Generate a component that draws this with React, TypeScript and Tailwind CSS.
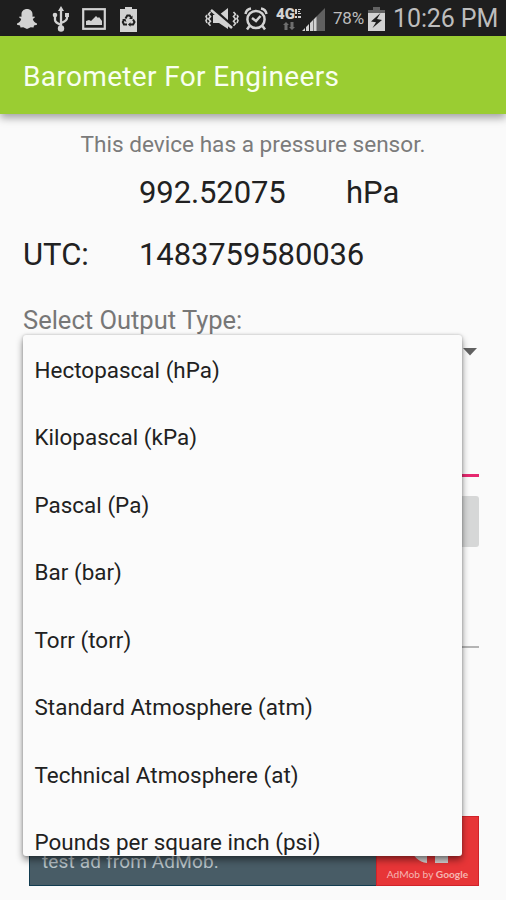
const OUTPUT_TYPES = [
  "Hectopascal (hPa)",
  "Kilopascal (kPa)",
  "Pascal (Pa)",
  "Bar (bar)",
  "Torr (torr)",
  "Standard Atmosphere (atm)",
  "Technical Atmosphere (at)",
  "Pounds per square inch (psi)",
];

function SnapchatIcon() {
  return (
    <svg width="22" height="22" viewBox="0 0 22 22" fill="#d2d2d2">
      <path d="M11 1C7.800 1 5.500 3.200 5.500 6.200v2.500l-2-.3-.3 1.200 2 1.400c-.5 2.200-2 3.600-4.200 4.600v1.200l3 .8.5 1.800 2.800-.2L11 21l3.700-1.800 2.800.2.5-1.800 3-.8v-1.200c-2.200-1-3.700-2.400-4.200-4.600l2-1.400-.3-1.200-2 .3V6.200C16.500 3.200 14.200 1 11 1z" />
    </svg>
  );
}

function UsbIcon() {
  return (
    <svg width="18" height="26" viewBox="0 0 18 26" fill="none" stroke="#d2d2d2" strokeWidth="2.300">
      <path d="M9 4v18M3 10v4c0 2 2 3 6 5M15 9v3c0 2.500-2 3.500-6 5" />
      <path d="M9 0l3 5H6zM13 7h4v4h-4z" fill="#d2d2d2" stroke="none" />
      <circle cx="3" cy="9" r="2.300" fill="#d2d2d2" stroke="none" />
      <circle cx="9" cy="22.500" r="3.200" fill="#d2d2d2" stroke="none" />
    </svg>
  );
}

function PictureIcon() {
  return (
    <svg width="24" height="22" viewBox="0 0 24 22">
      <rect x="1.200" y="1.200" width="21.600" height="19.600" fill="none" stroke="#d2d2d2" strokeWidth="2.200" />
      <path d="M4 17v-4l3-1 2 1 5-5 2 2 1-1 3 4v4z" fill="#d2d2d2" />
    </svg>
  );
}

function BatteryRecycleIcon() {
  return (
    <svg width="17" height="25" viewBox="0 0 17 25">
      <path d="M5 0h7v2h5v23H0V2h5z" fill="#d2d2d2" />
      <g fill="none" stroke="#1e1e1e" strokeWidth="2">
        <path d="M5.500 11.500L7.300 8.500h2.400l1.300 2M13 12.500l1.500 2.500-1.400 2.500H10M7 17.500H4L2.800 15l1.400-2.400" />
      </g>
      <path d="M12.500 8.500v3.500H9zM10.500 15.200v4.600L8 17.500zM2 12.500l3.400-.8 1 3.300z" fill="#1e1e1e" />
    </svg>
  );
}

function VibrateMuteIcon() {
  return (
    <svg width="34" height="24" viewBox="0 0 34 24" fill="none" stroke="#d2d2d2">
      <path d="M5.500 5l-2 2.300 2 2.300-2 2.300 2 2.300-2 2.300 2 2.300M2 8L1 9.500l1 2-1 2L2 16M28.500 5l2 2.300-2 2.300 2 2.300-2 2.300 2 2.300-2 2.300M32 8l1 1.500-1 2 1 2-1 2.500" strokeWidth="1.600" />
      <path d="M8 8h6l9-7v21l-9-6H8z" fill="#d2d2d2" stroke="none" />
      <path d="M8 2l19 17" stroke="#1e1e1e" strokeWidth="3.500" />
      <path d="M6 3l21 18" strokeWidth="2.600" />
    </svg>
  );
}

function AlarmIcon() {
  return (
    <svg width="24" height="24" viewBox="0 0 24 24" fill="none" stroke="#d2d2d2" strokeWidth="2.500">
      <circle cx="12" cy="12.500" r="8.600" />
      <path d="M8 11l4 3 4.500-5M1.500 7C2 4 4 2 7 1.500M22.500 7C22 4 20 2 17 1.500M5.500 19L3 22.500M18.500 19l2.500 3.500" />
    </svg>
  );
}

function NetworkIcon() {
  return (
    <div className="flex w-[27px] flex-col items-center">
      <div className="flex items-start text-[#d2d2d2]">
        <span className="text-[15px] leading-[12px] font-black">4G</span>
        <svg width="6" height="12" viewBox="0 0 6 12" fill="#d2d2d2">
          <path d="M0 1h2v5H0zM3 1h3v1H3zM3 3h2v1H3zM3 5h3v1H3zM0 8h2v2H0zM3 8h3v2H3z" />
        </svg>
      </div>
      <svg className="mt-0.5" width="12" height="8" viewBox="0 0 12 8" fill="#6e6e6e">
        <path d="M3 0l3 3H4.500v5h-3V3H0zM7.500 0h3v5H12L9 8 6 5h1.500z" />
      </svg>
    </div>
  );
}

function SignalIcon() {
  return (
    <svg width="23" height="23" viewBox="0 0 23 23">
      <path d="M14 9L23 0v23h-9z" fill="#606060" />
      <path d="M0 23h3v-3zM4 23h3v-7l-3 3zM8 23h3v-11l-3 3zM11.500 23h3V8.500l-3 3z" fill="#d2d2d2" />
    </svg>
  );
}

function BatteryIcon() {
  return (
    <svg width="17" height="24" viewBox="0 0 17 24">
      <path d="M5 0h7v3h5v4H0V3h5z" fill="#626262" />
      <path d="M0 6h17v18H0z" fill="#d2d2d2" />
      <path d="M12.500 6L3 14.500l5 .8L4.500 21 14 13l-5-1z" fill="#1e1e1e" />
    </svg>
  );
}

function StatusBar() {
  return (
    <header className="flex h-9 items-center bg-[#1e1e1e] pt-0.5 text-[#bdbdbd]">
      <div className="ml-4 flex w-[189px] items-center">
        <SnapchatIcon />
        <div className="ml-[14px]"><UsbIcon /></div>
        <div className="ml-[12px]"><PictureIcon /></div>
        <div className="ml-[14px]"><BatteryRecycleIcon /></div>
      </div>
      <VibrateMuteIcon />
      <div className="ml-[5px] shrink-0"><AlarmIcon /></div>
      <div className="ml-[7px] shrink-0"><NetworkIcon /></div>
      <div className="shrink-0"><SignalIcon /></div>
      <span className="ml-[8px] w-[35px] shrink-0 text-[17px] tracking-[-0.2px] whitespace-nowrap">78%</span>
      <div className="shrink-0"><BatteryIcon /></div>
      <span className="ml-[8px] text-[25px] leading-8 tracking-[-0.1px] whitespace-nowrap">10:26 PM</span>
    </header>
  );
}

function AdBanner() {
  return (
    <div className="ml-[29px] flex h-[70px] w-[450px] border border-[#123c50] bg-[#485c66]">
      <p className="w-[346px] shrink-0 pt-[31px] pl-3 text-[19px] leading-[27px] tracking-[0.15px] text-[#b9c3c8]">
        test ad from AdMob.
      </p>
      <div className="-my-px -mr-px flex w-[103px] shrink-0 flex-col items-center border border-[#d0232a] bg-[#e73537]">
        <svg className="mt-[13px] ml-[6px]" width="38" height="34" viewBox="0 0 38 34" fill="#d5d2d2">
          <path d="M0 19a18 18 0 0 1 36 0v14H23V19a6 6 0 0 0-12 0 6 6 0 0 0 4 6v8C7 32 0 26 0 19z" />
        </svg>
        <span className="mt-[2px] font-['Lato'] text-[10.2px] leading-4 whitespace-nowrap text-[#f5b5b2]">
          AdMob by <span className="font-bold">Google</span>
        </span>
      </div>
    </div>
  );
}

function OutputTypeMenu() {
  return (
    <ul className="absolute top-[335px] left-[23px] h-[521px] w-[439px] overflow-hidden rounded-[3px] bg-[#fbfbfb] pt-0.5 shadow-[0_4px_7px_rgba(0,0,0,0.45),0_0_3px_rgba(0,0,0,0.22)]">
      {OUTPUT_TYPES.map((type) => (
        <li key={type} className="flex h-[67.5px] items-center pl-[11.5px] text-[22.4px] tracking-[0.04px] text-[#212121]">
          {type}
        </li>
      ))}
    </ul>
  );
}

export default function App() {
  return (
    <div className="relative h-[900px] w-[506px] overflow-hidden bg-[#fafafa] font-['Roboto',sans-serif] text-[#212121]">
      <StatusBar />
      <div className="flex h-[78px] items-center bg-[#9acd32] pt-1 pl-[23px] shadow-[0_4px_8px_rgba(0,0,0,0.35)]">
        <h1 className="text-[28px] font-normal tracking-[0.35px] text-[#f8fff0]">Barometer For Engineers</h1>
      </div>
      <main>
        <p className="mt-[17px] text-center text-[22.6px] leading-[27px] text-[#7b7b7b]">
          This device has a pressure sensor.
        </p>
        <div className="mt-[16px] flex h-[38px] items-center pl-[139px] text-[31px]">
          <span className="w-[207px] tracking-[-0.1px]">992.52075</span>
          <span>hPa</span>
        </div>
        <div className="mt-[24px] flex h-[38px] items-center pl-[23px] text-[31px]">
          <span className="w-[116px]">UTC:</span>
          <span className="tracking-[-0.1px]">1483759580036</span>
        </div>
        <label className="mt-[30px] block pl-[23px] text-[25.5px] leading-[32px] text-[#777777]">
          Select Output Type:
        </label>
        <div className="mr-[29px] flex h-[20px] items-end justify-end">
          <svg width="14" height="8" viewBox="0 0 14 8" fill="#616161">
            <path d="M0 0h14L7 7.500z" />
          </svg>
        </div>
        <div className="mt-[118px] mr-[27px] ml-[23px] h-[3px] bg-[#e6286f]" />
        <div className="mt-[19px] mr-[27px] ml-[23px] h-[51px] rounded-[3px] bg-[#d6d7d7]" />
        <div className="mt-[99px] mr-[27px] ml-[23px] h-[2px] bg-[#b4b4b4]" />
        <div className="mt-[168px]">
          <AdBanner />
        </div>
      </main>
      <OutputTypeMenu />
    </div>
  );
}
